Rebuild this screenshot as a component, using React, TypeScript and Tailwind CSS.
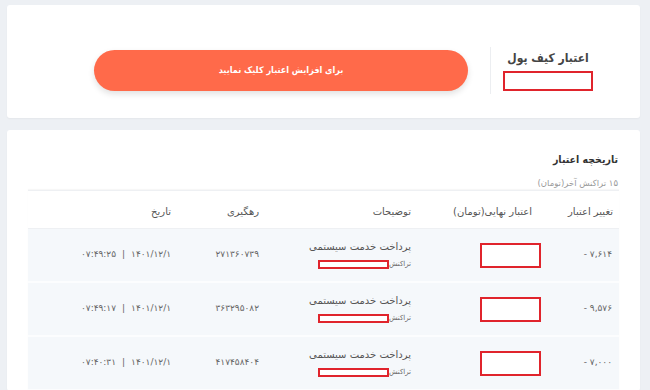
import React from 'react';

const rows = [
  { change: '- ۷,۶۱۴', track: '۲۷۱۳۶۰۷۳۹', date: '۱۴۰۱/۱۲/۱', time: '۰۷:۴۹:۲۵' },
  { change: '- ۹,۵۷۶', track: '۳۶۳۲۹۵۰۸۲', date: '۱۴۰۱/۱۲/۱', time: '۰۷:۴۹:۱۷' },
  { change: '- ۷,۰۰۰', track: '۴۱۷۴۵۸۴۰۴', date: '۱۴۰۱/۱۲/۱', time: '۰۷:۴۰:۳۱' },
];

const cols = 'grid grid-cols-[78px_121px_155px_87px_1fr]';

export default function App() {
  return (
    <div
      dir="rtl"
      className="min-h-screen bg-[#edf0f4] pt-[5px] pr-[10px] pl-[7px] font-['DejaVu_Sans',sans-serif] text-[#555]"
    >
      {/* Wallet card */}
      <div className="flex h-[113px] items-center rounded-[3px] bg-white pr-[35px] pt-[18px] shadow-[0_1px_2px_rgba(0,0,0,0.04)]">
        <div className="flex h-[47px] w-[115px] flex-col items-center justify-center border-l border-[#eceef1]">
          <div className="font-['DejaVu_Sans_Condensed','DejaVu_Sans',sans-serif] text-[12px] font-bold leading-[16px] text-[#444]">
            اعتبار کیف پول
          </div>
          <div className="mt-[5px] h-[20px] w-[90px] border-2 border-[#e0242c] bg-white" />
        </div>
        <button className="mr-[22px] h-[41px] w-[374px] rounded-full bg-[#ff6a4a] font-['DejaVu_Sans_Condensed','DejaVu_Sans',sans-serif] text-[9px] font-bold text-white shadow-[0_3px_6px_rgba(0,0,0,0.12)]">
          برای افزایش اعتبار کلیک نمایید
        </button>
      </div>

      {/* History card */}
      <div className="mt-[12px] rounded-[3px] bg-white px-[21px] pt-[21px] shadow-[0_1px_2px_rgba(0,0,0,0.04)]">
        <div className="pr-[1px] font-['DejaVu_Sans_Condensed','DejaVu_Sans',sans-serif] text-[10.5px] font-bold leading-[16px] text-[#333]">
          تاریخچه اعتبار
        </div>
        <div className="mt-[9px] pr-[1px] text-[8.5px] leading-[14px] text-[#999]">۱۵ تراکنش آخر(تومان)</div>

        <div className="border-t border-[#eef0f3] shadow-[0_-1px_1px_rgba(0,0,0,0.03)]">
          <div className={`${cols} h-[38px] items-center border-b border-[#eef0f3] pt-[4px] text-[10px] text-[#555]`}>
            <div className="pr-[6px]">تغییر اعتبار</div>
            <div className="pr-[9px]">اعتبار نهایی(تومان)</div>
            <div className="pr-[9px]">توضیحات</div>
            <div className="pr-[6px]">رهگیری</div>
            <div className="pr-[7px]">تاریخ</div>
          </div>

          {rows.map((r, i) => (
            <div
              key={i}
              className={`${cols} h-[54px] items-center border-b-2 border-[#fcfdfe] bg-[#f5f8fb] text-[9px] text-[#666]`}
            >
              <div className="pr-[7px]">
                <span dir="ltr">{r.change}</span>
              </div>
              <div className="flex">
                <div className="h-[25px] w-[61px] border-2 border-[#e0242c] bg-white" />
              </div>
              <div className="pr-[9px]">
                <div className="text-[10px] leading-[14px] text-[#555]">پرداخت خدمت سیستمی</div>
                <div className="mt-[5px] flex items-center">
                  <span className="text-[7px] text-[#666]">تراکنش</span>
                  <span className="h-[9px] w-[71px] border-2 border-[#e0242c] bg-white" />
                </div>
              </div>
              <div className="pr-[6px]">{r.track}</div>
              <div className="flex items-center gap-[6px] pr-[7px]">
                <span>{r.date}</span>
                <span>|</span>
                <span>{r.time}</span>
              </div>
            </div>
          ))}
        </div>
      </div>
    </div>
  );
}
